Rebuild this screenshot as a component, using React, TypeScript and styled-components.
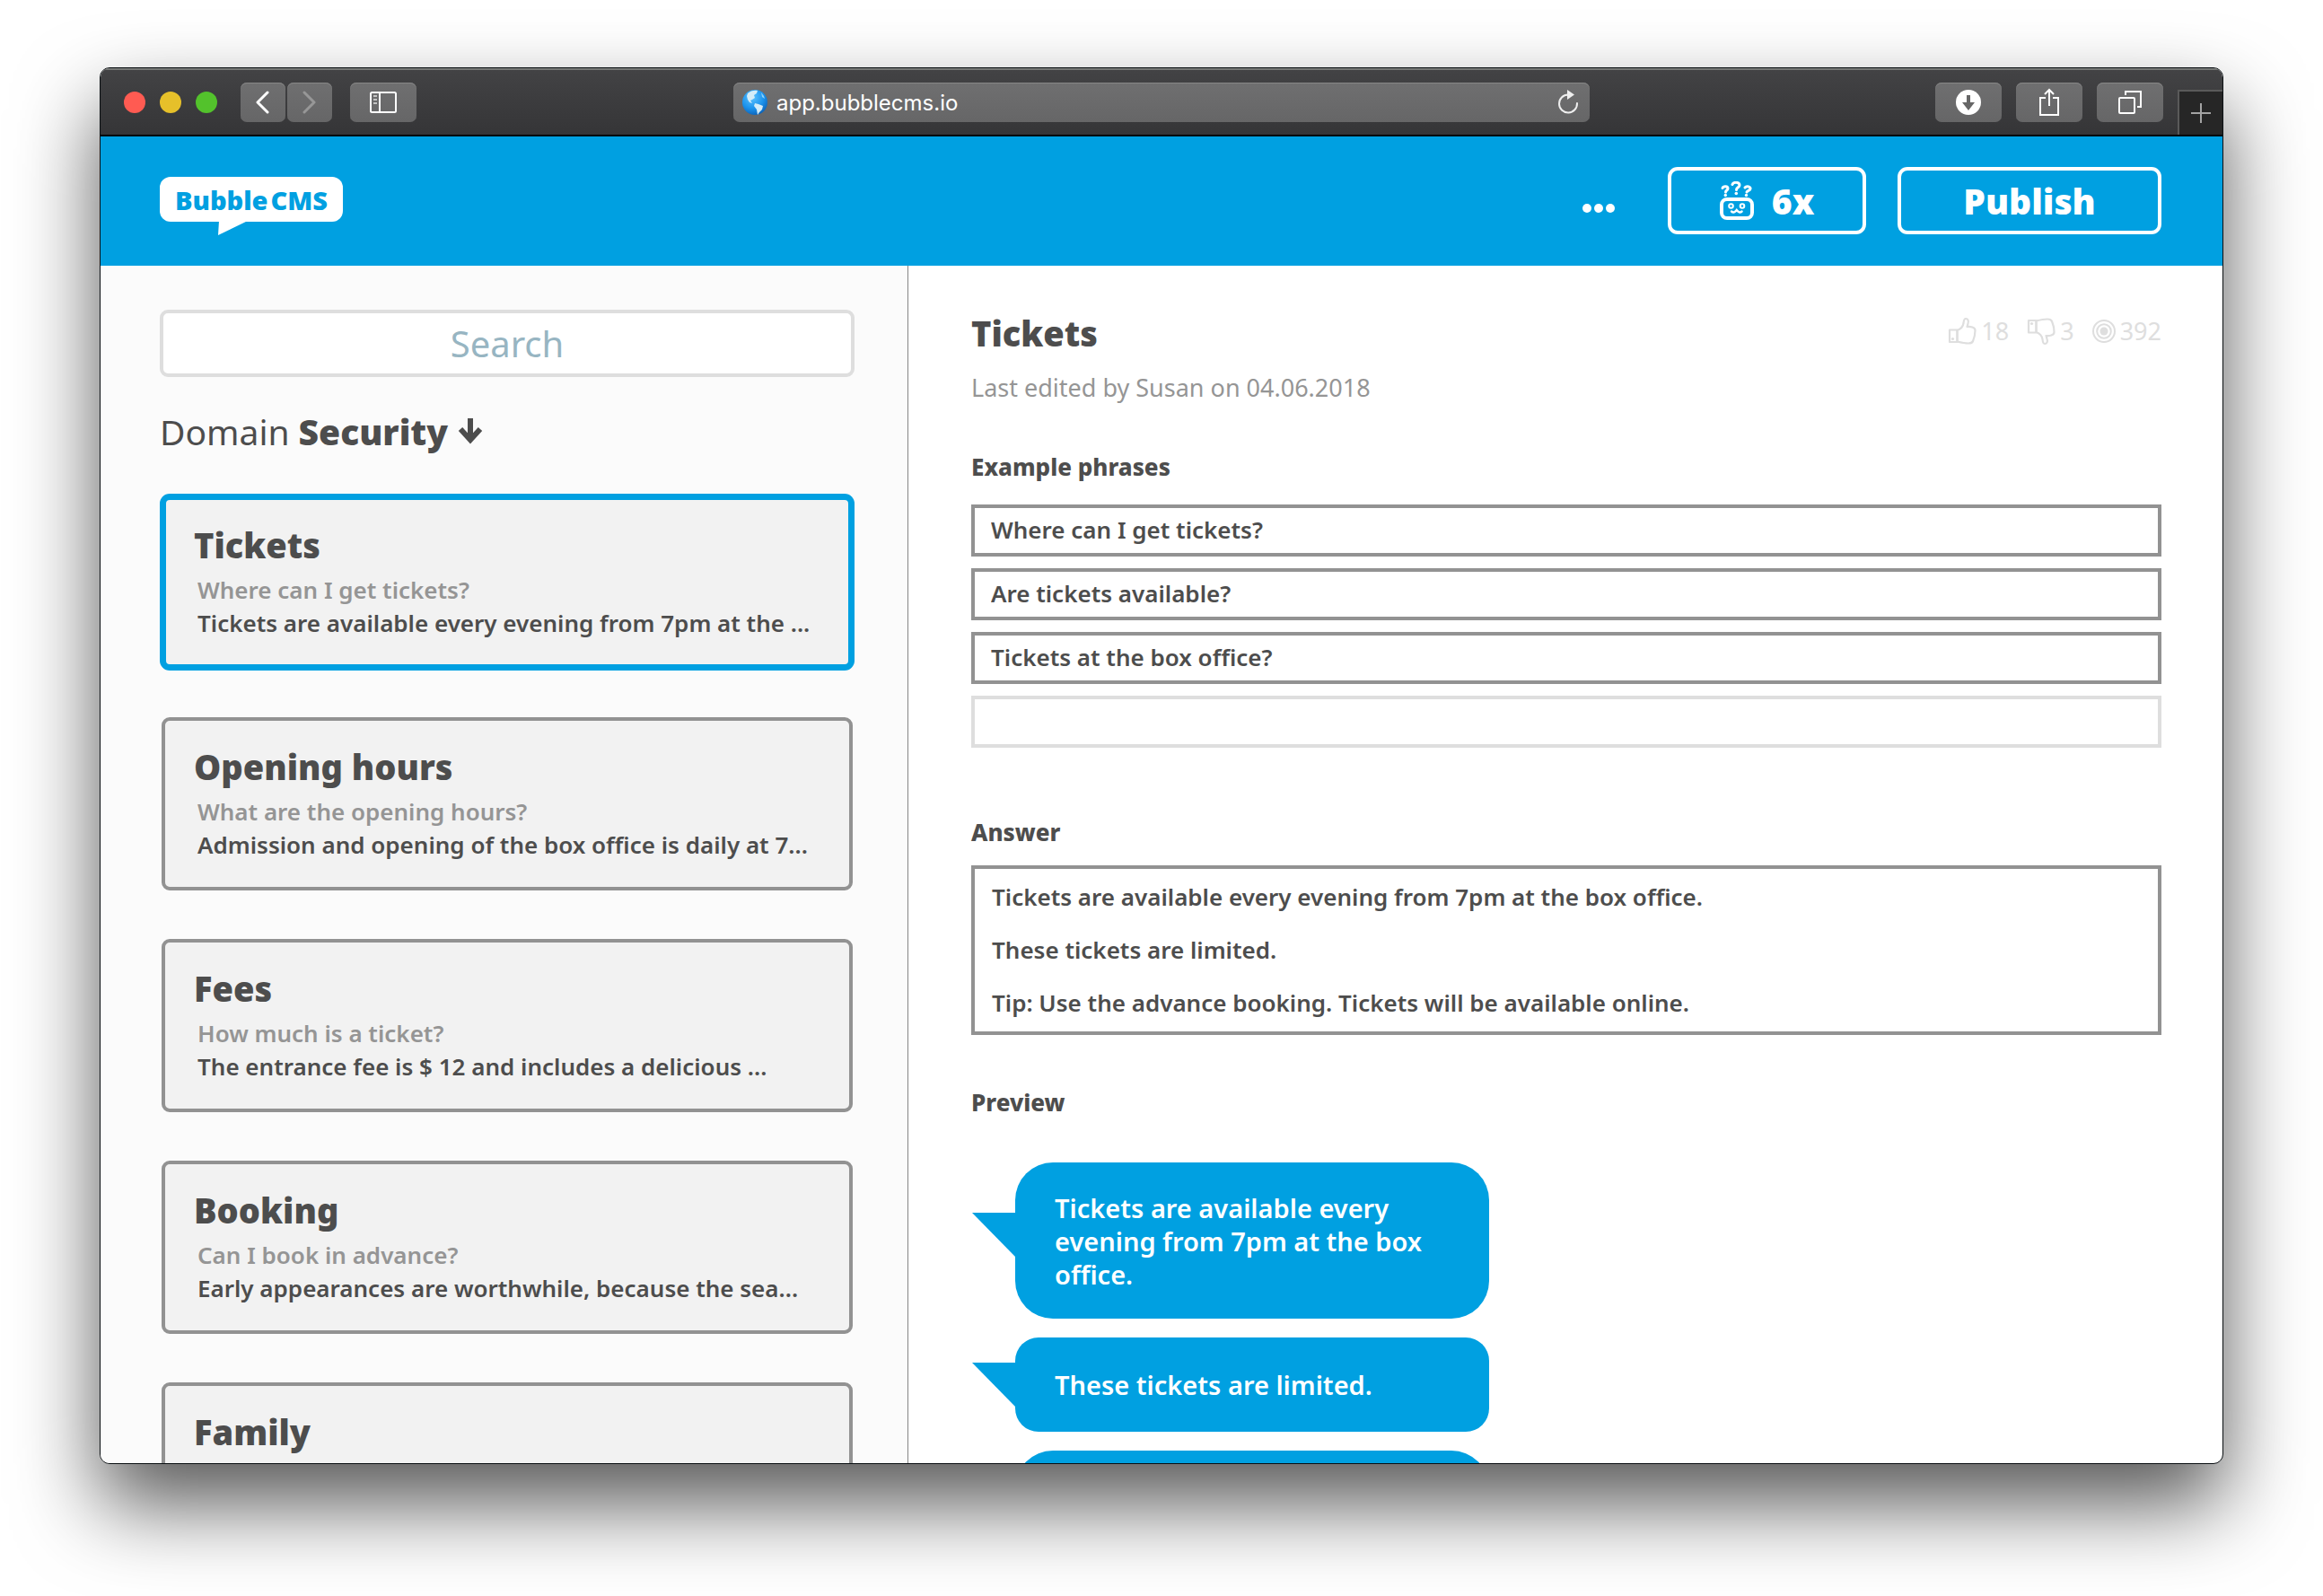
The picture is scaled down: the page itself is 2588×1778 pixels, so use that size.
import React from "react";
import styled, { createGlobalStyle, css } from "styled-components";

const color = {
  brand: "#00a0e1",
  ink: "#4d4d4d",
  muted: "#959595",
  line: "#929292",
  faint: "#dedede",
};

const GlobalStyle = createGlobalStyle`
  *, *::before, *::after { box-sizing: border-box; }
  body { margin: 0; background: #fff; }
  body, button, input, textarea, select {
    font-family: "Noto Sans", "Open Sans", sans-serif;
    color: ${color.ink};
  }
  button, input, textarea, select { margin: 0; padding: 0; border: 0; background: none; border-radius: 0; }
  h1, h2, h3, p, ul { margin: 0; padding: 0; }
  ul { list-style: none; }
  svg { display: block; flex: none; }
`;

const Desktop = styled.div`
  height: 100vh;
  padding: 75px 111px 147px;
  display: flex;
`;

const Window = styled.div`
  flex: 1;
  min-width: 0;
  display: flex;
  flex-direction: column;
  overflow: hidden;
  border: 1px solid #0a0f12;
  border-radius: 11px;
  background: #fff;
  box-shadow: 0 45px 92px rgba(0, 0, 0, 0.66);
`;

/* ---------- browser chrome ---------- */

const Toolbar = styled.div`
  flex: none;
  height: 76px;
  padding-top: 2px;
  display: grid;
  grid-template-columns: 1fr minmax(0, 954px) 1fr;
  align-items: center;
  border-bottom: 2px solid #050505;
  background: linear-gradient(#434345, #353537);
  box-shadow: inset 0 2px 0 #767876;
`;

const ToolGroup = styled.div`
  display: flex;
  align-items: center;
`;

const Lights = styled.div`
  display: flex;
  gap: 16px;
  padding: 0 26px;
`;

const Light = styled.span<{ $tone: string }>`
  width: 24px;
  height: 24px;
  border-radius: 50%;
  background: ${(p) => p.$tone};
`;

const toolSurface = css`
  height: 44px;
  border-radius: 7px;
  background: linear-gradient(#6f6f70, #666667);
  box-shadow: inset 0 1px 0 #868686;
`;

const ToolButton = styled.button<{ $narrow?: boolean }>`
  ${toolSurface}
  width: ${(p) => (p.$narrow ? 50 : 74)}px;
  display: grid;
  place-items: center;
`;

const NavPair = styled.div`
  display: flex;
  gap: 2px;
  margin-right: 20px;
`;

const RightTools = styled(ToolGroup)`
  align-self: stretch;
  justify-content: flex-end;
  gap: 16px;
`;

const NewTab = styled.button`
  align-self: flex-end;
  width: 50px;
  height: 50px;
  display: grid;
  place-items: center;
  border-top: 2px solid #5a5a5a;
  border-left: 2px solid #5a5a5a;
  background: #262626;
`;

const AddressBar = styled.label`
  ${toolSurface}
  display: flex;
  align-items: center;
  gap: 10px;
  padding: 0 10px;
`;

const Address = styled.input`
  flex: 1;
  min-width: 0;
  height: 40px;
  font-family: Inter, Roboto, sans-serif;
  font-size: 24px;
  color: #fff;
`;

const Reload = styled.button`
  display: grid;
  place-items: center;
  width: 28px;
  height: 40px;
`;

/* ---------- app header ---------- */

const AppHeader = styled.header`
  flex: none;
  height: 144px;
  display: flex;
  align-items: flex-start;
  padding: 34px 68px 0 66px;
  background: ${color.brand};
`;

const Logo = styled.a`
  position: relative;
  display: flex;
  align-items: center;
  justify-content: center;
  gap: 3px;
  width: 204px;
  height: 50px;
  margin-top: 11px;
  border-radius: 12px;
  background: #fff;
  color: ${color.brand};
  font-size: 29px;
  font-weight: 900;
  text-decoration: none;
`;

const LogoTail = styled.svg`
  position: absolute;
  top: 49px;
  left: 65px;
`;

const Actions = styled.div`
  display: flex;
  align-items: center;
  gap: 35px;
  margin-left: auto;
`;

const More = styled.button`
  height: 75px;
  display: flex;
  align-items: center;
  gap: 3px;
  padding: 16px 24px 0 0;
`;

const Dot = styled.span`
  width: 10px;
  height: 10px;
  border-radius: 50%;
  background: #fff;
`;

const Action = styled.button<{ $wide?: boolean }>`
  width: ${(p) => (p.$wide ? 294 : 221)}px;
  height: 75px;
  display: flex;
  align-items: center;
  justify-content: center;
  gap: 20px;
  border: 4px solid #fff;
  border-radius: 11px;
  color: #fff;
  font-size: 39px;
  font-weight: 900;
`;

/* ---------- layout ---------- */

const Body = styled.div`
  flex: 1;
  min-height: 0;
  display: grid;
  grid-template-columns: 75fr 122fr;
  overflow: hidden;
`;

const Sidebar = styled.aside`
  min-width: 0;
  padding: 49px 59px 0 66px;
  border-right: 1px solid #858585;
  background: #fbfbfb;
  overflow: hidden;
`;

const Search = styled.input`
  display: block;
  width: 100%;
  height: 75px;
  border: 4px solid ${color.faint};
  border-radius: 9px;
  background: #fff;
  font-size: 40px;
  text-align: center;
  &::placeholder { color: #97b5c2; opacity: 1; }
  &::-webkit-search-cancel-button { display: none; }
`;

const DomainRow = styled.div`
  display: flex;
  align-items: center;
  gap: 10px;
  height: 52px;
  margin: 34px 0 46px;
  font-size: 39px;
`;

const DomainSelect = styled.select`
  appearance: none;
  height: 52px;
  font-size: 39px;
  font-weight: 900;
`;

const CardList = styled.ul`
  display: grid;
  gap: 54px;
  padding: 0 2px;
`;

const Card = styled.button<{ $selected?: boolean }>`
  display: flex;
  flex-direction: column;
  align-items: flex-start;
  justify-content: flex-start;
  width: 100%;
  height: 193px;
  padding: ${(p) => (p.$selected ? "24px 31px" : "25px 32px")};
  border: ${(p) => (p.$selected ? `5px solid ${color.brand}` : `4px solid ${color.line}`)};
  border-radius: 9px;
  background: #f2f2f2;
  text-align: left;
  box-shadow: ${(p) => (p.$selected ? `0 0 0 2px ${color.brand}` : "none")};
`;

const Title = styled.h2`
  font-size: 38px;
  line-height: 52px;
  font-weight: 900;
`;

const CardLine = styled.span<{ $muted?: boolean }>`
  margin-top: ${(p) => (p.$muted ? 6 : 0)}px;
  padding-left: 4px;
  font-size: 26px;
  line-height: 37px;
  font-weight: 600;
  white-space: nowrap;
  color: ${(p) => (p.$muted ? color.muted : color.ink)};
`;

/* ---------- editor ---------- */

const Editor = styled.main`
  min-width: 0;
  padding: 49px 68px 0 70px;
  overflow: hidden;
`;

const EditorHead = styled.div`
  display: flex;
  justify-content: space-between;
  align-items: center;
`;

const Stats = styled.ul`
  display: flex;
  gap: 20px;
  padding-bottom: 4px;
`;

const Stat = styled.li`
  display: flex;
  align-items: center;
  gap: 5px;
  font-size: 27px;
  line-height: 36px;
  color: ${color.faint};
`;

const Edited = styled.p`
  margin-top: 17px;
  font-size: 27px;
  line-height: 36px;
  color: ${color.muted};
`;

const SectionTitle = styled.h3<{ $gap: number }>`
  margin-top: ${(p) => p.$gap}px;
  font-size: 26px;
  line-height: 36px;
  font-weight: 800;
`;

const Phrases = styled.div`
  display: grid;
  gap: 13px;
  margin-top: 24px;
`;

const Phrase = styled.input<{ $blank?: boolean }>`
  width: 100%;
  height: 58px;
  padding: 0 18px 2px;
  border: 4px solid ${(p) => (p.$blank ? color.faint : color.line)};
  font-size: 26px;
  font-weight: 600;
`;

const Answer = styled.textarea`
  display: block;
  width: 100%;
  height: 189px;
  margin-top: 19px;
  padding: 2px 19px;
  border: 4px solid ${color.line};
  resize: none;
  overflow: hidden;
  font-size: 26px;
  line-height: 59px;
  font-weight: 600;
`;

const Bubbles = styled.div`
  display: grid;
  justify-items: start;
  gap: 21px;
  margin-top: 49px;
  padding-left: 49px;
`;

const Bubble = styled.p<{ $small?: boolean }>`
  position: relative;
  width: 528px;
  min-height: ${(p) => (p.$small ? 105 : 174)}px;
  display: flex;
  align-items: center;
  padding: 20px 44px;
  border-radius: ${(p) => (p.$small ? 26 : 42)}px;
  background: ${color.brand};
  color: #fff;
  font-size: 29px;
  line-height: 37px;
  font-weight: 600;
  &::before {
    content: "";
    position: absolute;
    top: ${(p) => (p.$small ? 28 : 56)}px;
    right: 100%;
    width: 48px;
    height: 49px;
    background: ${color.brand};
    clip-path: polygon(0 0, 100% 0, 100% 100%);
  }
`;

/* ---------- drawings ---------- */

const Chevron = ({ back }: { back?: boolean }) => (
  <svg width="16" height="26" viewBox="0 0 16 26" fill="none" stroke={back ? "#fff" : "#979797"} strokeWidth="3" strokeLinecap="round" strokeLinejoin="round">
    <path d={back ? "M13 2 2 13l11 11" : "M2 2l11 11L2 24"} />
  </svg>
);

const SidebarIcon = () => (
  <svg width="30" height="24" viewBox="0 0 30 24" fill="none" stroke="#fff" strokeWidth="2">
    <rect x="1" y="1" width="28" height="22" rx="1.5" />
    <path d="M11 1v22" />
    <path d="M4 5h4M4 9h4M4 13h4" stroke="#c4c4c4" />
  </svg>
);

const Globe = () => (
  <svg width="28" height="28" viewBox="0 0 28 28">
    <defs>
      <radialGradient id="sea" cx="0.4" cy="0.3" r="0.75">
        <stop offset="0" stopColor="#5cc3ff" />
        <stop offset="0.6" stopColor="#1b92ec" />
        <stop offset="1" stopColor="#0c5fb4" />
      </radialGradient>
    </defs>
    <circle cx="14" cy="14" r="14" fill="url(#sea)" />
    <path d="M6 4c3-3 8-4 11-3l-1 3-3 2 1 3-3 2-2 1 2 3-3-1-2-3-1-4zM14 15l4 1 5 2-1 4-3 3-2 3-1-6-3-4z" fill="#d4ecf8" />
    <path d="M21 3l3 4 1 3-3-2z" fill="#8dd0f6" />
  </svg>
);

const ReloadIcon = () => (
  <svg width="24" height="28" viewBox="0 0 24 28" fill="none">
    <path d="M12 5.500a10 10 0 1 0 10 9.500" stroke="#eee" strokeWidth="2" strokeLinecap="round" />
    <path d="M11 0l8 5.500-8 5.500z" fill="#eee" />
  </svg>
);

const DownloadIcon = () => (
  <svg width="28" height="28" viewBox="0 0 28 28">
    <circle cx="14" cy="14" r="14" fill="#fff" />
    <path d="M12 6h4v8h5l-7 9-7-9h5z" fill="#666" />
  </svg>
);

const ShareIcon = () => (
  <svg width="24" height="32" viewBox="0 0 24 32" fill="none" stroke="#fff" strokeWidth="2">
    <path d="M8 11H2v19h20V11h-6M12 20V2M7 7l5-5 5 5" />
  </svg>
);

const TabsIcon = () => (
  <svg width="26" height="26" viewBox="0 0 26 26" fill="none" stroke="#fff" strokeWidth="2">
    <rect x="1" y="8" width="17" height="17" rx="1" />
    <path d="M8 5V1h17v17h-4" />
  </svg>
);

const PlusIcon = () => (
  <svg width="22" height="22" viewBox="0 0 22 22" stroke="#a4a4a4" strokeWidth="2">
    <path d="M11 0v22M0 11h22" />
  </svg>
);

const RobotIcon = () => (
  <svg width="38" height="44" viewBox="0 0 38 44" fill="none" stroke="#fff" strokeLinecap="round">
    <rect x="2" y="20" width="34" height="21" rx="6" strokeWidth="4" />
    <g strokeWidth="3">
      <path d="M3 7.500c1-2.500 6-2.500 6 .5 0 2-2.500 2-2.500 4" />
      <path d="M14 3.500c1-3 8-3 8 .8 0 2.500-3.500 2.500-3.500 5.200" />
      <path d="M28 7c2-2.500 6.500-1 6 1.500-.4 2-3.500 1.800-4 3.500" />
    </g>
    <g fill="#fff" stroke="none">
      <circle cx="6.300" cy="15.500" r="1.700" />
      <circle cx="18.300" cy="13.500" r="1.800" />
      <circle cx="29.500" cy="15.500" r="1.700" />
    </g>
    <circle cx="12.500" cy="27.500" r="2.300" strokeWidth="2" />
    <circle cx="25" cy="27.500" r="2.300" strokeWidth="2" />
    <path d="M13 33.500c2 1.800 4 .8 5.800-1.500 1.800 2.300 3.800 3.300 5.800 1.500" strokeWidth="2.400" />
  </svg>
);

const ArrowDown = () => (
  <svg width="28" height="30" viewBox="0 0 28 30" fill="none" stroke={color.ink} strokeWidth="6">
    <path d="M14 1v24M3 13l11 12 11-12" />
  </svg>
);

const Thumb = ({ down }: { down?: boolean }) => (
  <svg width="32" height="32" viewBox="0 0 32 32" fill="none" stroke={color.faint} strokeWidth="2.200" strokeLinejoin="round">
    <g transform={down ? "matrix(1 0 0 -1 0 32)" : undefined}>
      <path d="M2 14.500h8.500V28H2z" />
      <path d="M10.500 15c4-1.500 6.500-4.500 7-8 .3-3 1-5 2.500-5 2.500 0 3.500 2.500 2.500 5.500L21.500 11c3.500-.5 9 .5 9 4 0 4-1 8.500-2.500 12-.8 2-2.500 2.500-5 2.500-4.500 0-8.500-1-12.500-2z" />
      <circle cx="5.500" cy="24.500" r="1.600" fill={color.faint} stroke="none" />
    </g>
  </svg>
);

const Target = () => (
  <svg width="26" height="26" viewBox="0 0 26 26" fill="none" stroke={color.faint} strokeWidth="2">
    <circle cx="13" cy="13" r="12" />
    <circle cx="13" cy="13" r="7.800" />
    <circle cx="13" cy="13" r="4.500" fill={color.faint} stroke="none" />
  </svg>
);

/* ---------- content ---------- */

const topics = [
  { title: "Tickets", question: "Where can I get tickets?", answer: "Tickets are available every evening from 7pm at the ..." },
  { title: "Opening hours", question: "What are the opening hours?", answer: "Admission and opening of the box office is daily at 7..." },
  { title: "Fees", question: "How much is a ticket?", answer: "The entrance fee is $ 12 and includes a delicious ..." },
  { title: "Booking", question: "Can I book in advance?", answer: "Early appearances are worthwhile, because the sea..." },
  { title: "Family", question: "", answer: "" },
];

const phrases = ["Where can I get tickets?", "Are tickets available?", "Tickets at the box office?", ""];

const answerLines = [
  "Tickets are available every evening from 7pm at the box office.",
  "These tickets are limited.",
  "Tip: Use the advance booking. Tickets will be available online.",
];

export default function App() {
  return (
    <>
      <GlobalStyle />
      <Desktop>
        <Window>
          <Toolbar>
            <ToolGroup>
              <Lights>
                <Light $tone="#ff5b52" />
                <Light $tone="#e6c02a" />
                <Light $tone="#53c22c" />
              </Lights>
              <NavPair>
                <ToolButton $narrow aria-label="Back"><Chevron back /></ToolButton>
                <ToolButton $narrow aria-label="Forward"><Chevron /></ToolButton>
              </NavPair>
              <ToolButton aria-label="Show sidebar"><SidebarIcon /></ToolButton>
            </ToolGroup>
            <AddressBar>
              <Globe />
              <Address aria-label="Address" defaultValue="app.bubblecms.io" />
              <Reload aria-label="Reload"><ReloadIcon /></Reload>
            </AddressBar>
            <RightTools>
              <ToolButton aria-label="Downloads"><DownloadIcon /></ToolButton>
              <ToolButton aria-label="Share"><ShareIcon /></ToolButton>
              <ToolButton aria-label="Show tabs"><TabsIcon /></ToolButton>
              <NewTab aria-label="New tab"><PlusIcon /></NewTab>
            </RightTools>
          </Toolbar>

          <AppHeader>
            <Logo href="#">
              <span>Bubble</span>
              <span>CMS</span>
              <LogoTail width="33" height="17" viewBox="0 0 33 17">
                <path d="M1 0h32L0 16z" fill="#fff" />
              </LogoTail>
            </Logo>
            <Actions>
              <More aria-label="More"><Dot /><Dot /><Dot /></More>
              <Action><RobotIcon />6x</Action>
              <Action $wide>Publish</Action>
            </Actions>
          </AppHeader>

          <Body>
            <Sidebar>
              <Search type="search" aria-label="Search" placeholder="Search" />
              <DomainRow>
                <label htmlFor="domain">Domain</label>
                <DomainSelect id="domain" defaultValue="Security">
                  <option>Security</option>
                </DomainSelect>
                <ArrowDown />
              </DomainRow>
              <CardList>
                {topics.map((topic, i) => (
                  <li key={topic.title}>
                    <Card $selected={i === 0}>
                      <Title as="span">{topic.title}</Title>
                      {topic.question && <CardLine $muted>{topic.question}</CardLine>}
                      {topic.answer && <CardLine>{topic.answer}</CardLine>}
                    </Card>
                  </li>
                ))}
              </CardList>
            </Sidebar>

            <Editor>
              <EditorHead>
                <Title as="h1">Tickets</Title>
                <Stats>
                  <Stat><Thumb />18</Stat>
                  <Stat><Thumb down />3</Stat>
                  <Stat><Target />392</Stat>
                </Stats>
              </EditorHead>
              <Edited>Last edited by Susan on 04.06.2018</Edited>

              <SectionTitle $gap={52} id="phrases">Example phrases</SectionTitle>
              <Phrases role="group" aria-labelledby="phrases">
                {phrases.map((phrase, i) => (
                  <Phrase key={i} $blank={!phrase} defaultValue={phrase} aria-label={`Example phrase ${i + 1}`} />
                ))}
              </Phrases>

              <SectionTitle $gap={76} id="answer">Answer</SectionTitle>
              <Answer aria-labelledby="answer" defaultValue={answerLines.join("\n")} />

              <SectionTitle $gap={57}>Preview</SectionTitle>
              <Bubbles>
                {answerLines.map((line, i) => (
                  <Bubble key={line} $small={i === 1}>{line}</Bubble>
                ))}
              </Bubbles>
            </Editor>
          </Body>
        </Window>
      </Desktop>
    </>
  );
}
